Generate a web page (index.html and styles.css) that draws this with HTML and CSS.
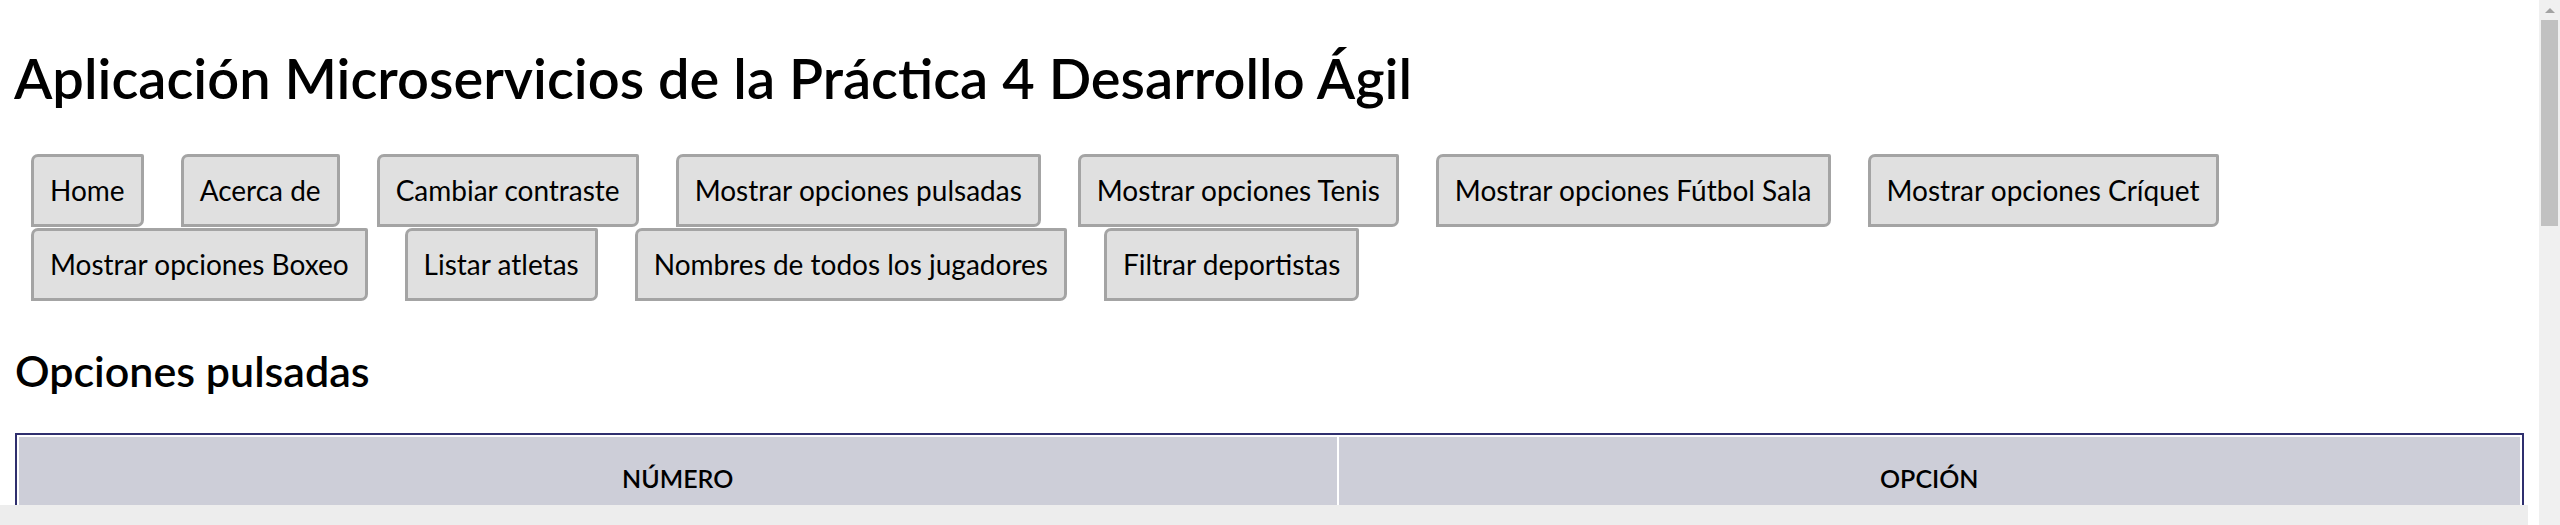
FILE: index.html
```html
<!DOCTYPE html>
<html lang="es">
<head>
<meta charset="utf-8">
<title>Aplicación Microservicios</title>
<link rel="stylesheet" href="styles.css">
</head>
<body>
<div class="page">
  <div class="main">
    <div class="content">
      <h1 class="title">Aplicación Microservicios de la Práctica 4 Desarrollo Ágil</h1>
      <nav class="menu">
        <button class="btn">Home</button>
        <button class="btn">Acerca de</button>
        <button class="btn">Cambiar contraste</button>
        <button class="btn">Mostrar opciones pulsadas</button>
        <button class="btn">Mostrar opciones Tenis</button>
        <button class="btn">Mostrar opciones Fútbol Sala</button>
        <button class="btn">Mostrar opciones Críquet</button>
        <button class="btn">Mostrar opciones Boxeo</button>
        <button class="btn">Listar atletas</button>
        <button class="btn">Nombres de todos los jugadores</button>
        <button class="btn">Filtrar deportistas</button>
      </nav>
      <h2 class="subtitle">Opciones pulsadas</h2>
      <table class="tabla">
        <thead>
          <tr>
            <th class="col-num">NÚMERO</th>
            <th class="col-opt">OPCIÓN</th>
          </tr>
        </thead>
      </table>
    </div>
    <div class="footer-row"><div class="footer"></div></div>
  </div>
  <div class="scrollbar">
    <div class="arrow"></div>
    <div class="thumb"></div>
  </div>
</div>
</body>
</html>
```
FILE: styles.css
```css
html, body {
  margin: 0;
  padding: 0;
  height: 100%;
  overflow: hidden;
  background: #fff;
}
body {
  font-family: Lato, "Noto Sans", sans-serif;
  color: #000;
}
.page {
  display: flex;
  height: 525px;
  overflow: hidden;
}
.main {
  flex: 1;
  min-width: 0;
  display: flex;
  flex-direction: column;
}
.content {
  flex: 1;
  overflow: hidden;
  min-height: 0;
}
.title {
  margin: 44px 0 0 14px;
  font-size: 56px;
  line-height: 1.2;
  font-weight: 600;
  white-space: nowrap;
}
.menu {
  display: flex;
  flex-wrap: wrap;
  column-gap: 37px;
  row-gap: 1px;
  margin: 43px 0 0 31px;
  width: 2500px;
}
.btn {
  font-family: inherit;
  font-size: 28px;
  line-height: 31px;
  color: #000;
  background: #e0e0e0;
  border: 3px solid #a4a4a4;
  border-radius: 7px 2px 7px 0;
  padding: 18px 16px;
  height: 73px;
  box-sizing: border-box;
}
.subtitle {
  margin: 44px 0 0 15px;
  font-size: 43px;
  line-height: 1.2;
  font-weight: 600;
}
.tabla {
  margin: 36px 0 0 15px;
  width: 2509px;
  border: 2px solid #2f2f6e;
  border-spacing: 2px;
}
.tabla th {
  background: #cdced8;
  font-size: 25px;
  font-weight: 600;
  height: 82px;
  padding: 0;
}
.col-num { width: 1317px; }
.col-opt { width: 1181px; }
.footer-row {
  height: 20px;
  flex-shrink: 0;
}
.footer {
  width: 2528px;
  height: 20px;
  background: #ededed;
}
.scrollbar {
  width: 21px;
  flex-shrink: 0;
  background: #f0f0f0;
  display: flex;
  flex-direction: column;
  align-items: center;
}
.arrow {
  margin-top: 8px;
  width: 0;
  height: 0;
  border-left: 5px solid transparent;
  border-right: 5px solid transparent;
  border-bottom: 5px solid #a3a3a3;
}
.thumb {
  margin-top: 7px;
  width: 17px;
  height: 206px;
  background: #c1c1c1;
}
```
